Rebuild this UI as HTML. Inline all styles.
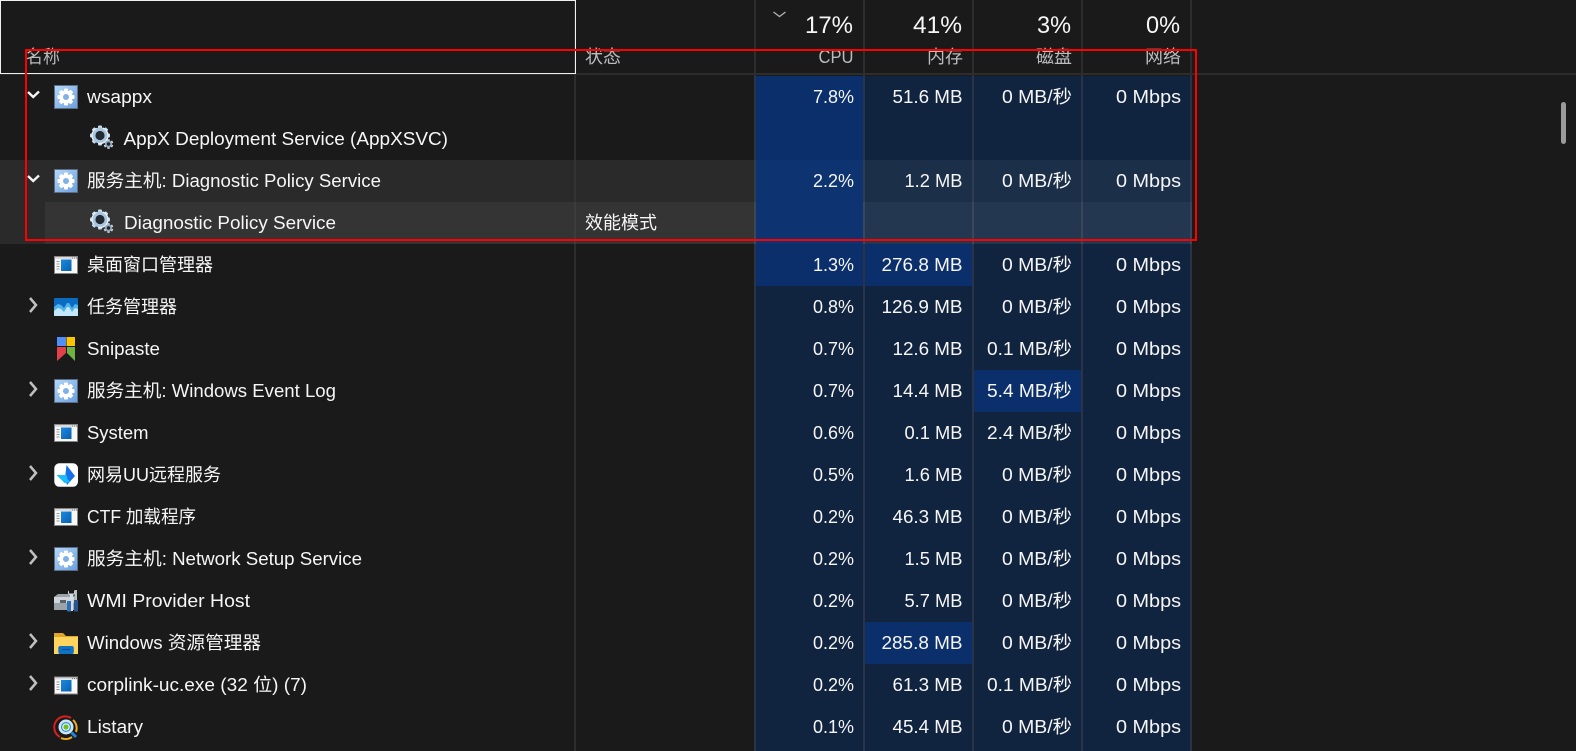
<!DOCTYPE html>
<html><head><meta charset="utf-8"><style>
html,body{margin:0;padding:0;background:#1a1a1a;width:1576px;height:751px;overflow:hidden}
svg{display:block}
text{font-family:"Liberation Sans","Noto Sans CJK SC",sans-serif;font-size:18px;fill:#f6f6f6}
.e{text-anchor:end}
.h{fill:#bcbcbc}
.b{font-size:24.500px;fill:#f6f6f6;text-anchor:end}
</style></head><body>
<svg width="1576" height="751" viewBox="0 0 1576 751" xmlns="http://www.w3.org/2000/svg">
<defs>
<linearGradient id="gt" x1="0" y1="0" x2="1" y2="1"><stop offset="0" stop-color="#b4d8f8"/><stop offset="1" stop-color="#6a9ede"/></linearGradient>
<linearGradient id="gs" x1="0" y1="0" x2="1" y2="1"><stop offset="0" stop-color="#1a8ae0"/><stop offset="1" stop-color="#0a5fb0"/></linearGradient>
<g id="svc">
<rect x="54.500" y="0.500" width="23" height="23" fill="url(#gt)" stroke="#5b6d84"/>
<g transform="translate(66,12)" fill="#fff">
<rect x="-2" y="-8.500" width="4" height="17" rx="1"/><rect x="-2" y="-8.500" width="4" height="17" rx="1" transform="rotate(45)"/><rect x="-2" y="-8.500" width="4" height="17" rx="1" transform="rotate(90)"/><rect x="-2" y="-8.500" width="4" height="17" rx="1" transform="rotate(135)"/>
<circle r="6.600"/><circle r="3" fill="#7fb0e6"/>
</g></g>
<g id="gears">
<g transform="translate(100,9.500)" fill="#c9dcec">
<rect x="-2" y="-10" width="4" height="20" rx="1"/><rect x="-2" y="-10" width="4" height="20" rx="1" transform="rotate(45)"/><rect x="-2" y="-10" width="4" height="20" rx="1" transform="rotate(90)"/><rect x="-2" y="-10" width="4" height="20" rx="1" transform="rotate(135)"/>
<circle r="8" fill="#a9c6e0"/><circle r="8" fill="none" stroke="#eef5fb" stroke-width="1.200" stroke-dasharray="14 6"/><circle r="4.600" fill="#222a33"/></g>
<g transform="translate(108.500,18)" fill="#d6dde4">
<rect x="-1.200" y="-4.800" width="2.400" height="9.600"/><rect x="-1.200" y="-4.800" width="2.400" height="9.600" transform="rotate(60)"/><rect x="-1.200" y="-4.800" width="2.400" height="9.600" transform="rotate(120)"/>
<circle r="3.600" fill="#8fa6ba"/><circle r="1.700" fill="#1f252b"/></g>
</g>
<g id="win">
<rect x="54.500" y="0.500" width="23" height="17" fill="#f8f8f8" stroke="#868686"/>
<rect x="55" y="1" width="22" height="2" fill="#dcdcdc"/>
<rect x="61" y="3.500" width="10.500" height="11.500" fill="url(#gs)"/>
<path d="M56.500 5.500h3M56.500 8h3M56.500 10.500h3M56.500 13h3" stroke="#9a9a9a" stroke-width="1"/>
<path d="M72 2h1M74 2h1M76 2h1" stroke="#777" stroke-width="1"/>
</g>
<g id="cr"><path d="M30 -7l6 7-6 7" fill="none" stroke="#c0c0c0" stroke-width="2.500"/></g>
<g id="cd"><path d="M28 -3l5.200 5 5.800-5.500" fill="none" stroke="#f4f4f4" stroke-width="2.400"/></g>
</defs>

<rect width="1576" height="751" fill="#1a1a1a"/>

<!-- row highlights -->
<rect x="0" y="160" width="755" height="42" fill="#2a2a2a"/>
<rect x="0" y="202" width="45" height="42" fill="#2a2a2a"/>
<rect x="45" y="202" width="710" height="42" fill="#343434"/>

<!-- heat background -->
<rect x="755" y="76" width="436" height="675" fill="#11243f"/>
<rect x="755" y="76" width="109" height="168" fill="#0a2f6b"/>
<rect x="864" y="160" width="327" height="42" fill="#1c2f49"/>
<rect x="864" y="202" width="327" height="42" fill="#243750"/>
<rect x="755" y="160" width="109" height="84" fill="#0d3371"/>
<rect x="755" y="244" width="218" height="42" fill="#0a2f6b"/>
<rect x="973" y="370" width="109" height="42" fill="#0a2f6b"/>
<rect x="864" y="622" width="109" height="42" fill="#0a2f6b"/>

<!-- separators -->
<rect x="0" y="73" width="1576" height="2" fill="#2d2d2d"/>
<path d="M575 0V160M575 244V751" stroke="#2d2d2d" stroke-width="2"/>
<path d="M575 160V202" stroke="#333333" stroke-width="2"/>
<path d="M575 202V244" stroke="#3c3c3c" stroke-width="2"/>
<path d="M755 0V75M864 0V75M973 0V75M1082 0V75M1191 0V75" stroke="#2d2d2d" stroke-width="2"/>
<path d="M755 75V751M864 75V751M973 75V751M1082 75V751M1191 75V751" stroke="#2a3446" stroke-width="2"/>
<path d="M755 160V202M864 160V202M973 160V202M1082 160V202M1191 160V202" stroke="#303c50" stroke-width="2"/>
<path d="M755 202V244M864 202V244M973 202V244M1082 202V244M1191 202V244" stroke="#3b4658" stroke-width="2"/>

<!-- focus box -->
<rect x="0.500" y="0.500" width="575" height="73" fill="none" stroke="#f0f0f0" stroke-width="1"/>

<!-- header -->
<path d="M773.500 12l6 4.500 6-4.500" fill="none" stroke="#b0b0b0" stroke-width="1.300"/>
<text class="b" x="853" y="33" textLength="48" lengthAdjust="spacingAndGlyphs">17%</text>
<text class="b" x="962" y="33" textLength="49" lengthAdjust="spacingAndGlyphs">41%</text>
<text class="b" x="1071" y="33" textLength="34" lengthAdjust="spacingAndGlyphs">3%</text>
<text class="b" x="1180" y="33" textLength="34" lengthAdjust="spacingAndGlyphs">0%</text>
<text class="h" x="26" y="63" textLength="34" lengthAdjust="spacingAndGlyphs">名称</text>
<text class="h" x="585" y="63" textLength="36" lengthAdjust="spacingAndGlyphs">状态</text>
<text class="h e" x="853.500" y="63" textLength="35" lengthAdjust="spacingAndGlyphs">CPU</text>
<text class="h e" x="963" y="63" textLength="36" lengthAdjust="spacingAndGlyphs">内存</text>
<text class="h e" x="1072" y="63" textLength="36" lengthAdjust="spacingAndGlyphs">磁盘</text>
<text class="h e" x="1181" y="63" textLength="36" lengthAdjust="spacingAndGlyphs">网络</text>

<!-- icons -->
<use href="#cd" y="95"/><use href="#svc" y="85"/>
<use href="#gears" y="126"/>
<use href="#cd" y="179"/><use href="#svc" y="169"/>
<use href="#gears" y="210"/>
<use href="#win" y="256"/>
<use href="#cr" y="305"/>
<g>
<rect x="54" y="298" width="24" height="18" rx="1" fill="#0a6cc0"/>
<path d="M54 307l4-3 3 1 3 3 3-5 2 0 3 5 3-4 3 1v11H54z" fill="#50b2ec"/>
<path d="M54 311l4-3 3 1 3 3 3-5 2 0 3 5 3-4 3 1v6a1 1 0 0 1-1 1H55a1 1 0 0 1-1-1z" fill="#c4e8fb"/>
</g>
<g>
<rect x="57" y="337" width="9" height="9" fill="#4f8ff7"/>
<rect x="66.500" y="337" width="8.500" height="9" fill="#ffc400"/>
<path d="M57 347h9v6l-9 8z" fill="#e2404a"/>
<path d="M67 347h8v14l-8-8z" fill="#6cb33f"/>
</g>
<use href="#cr" y="389"/><use href="#svc" y="379"/>
<use href="#win" y="424"/>
<use href="#win" y="508"/>
<use href="#cr" y="473"/>
<g>
<rect x="54.300" y="463.300" width="23.700" height="23.500" rx="5" fill="#fff"/>
<path d="M66.500 465l8.500 11-8 9-2-7z" fill="#1670e8"/>
<path d="M56.500 475h10l1 4 3 3-6 1z" fill="#19bdfc"/>
</g>
<use href="#cr" y="557"/><use href="#svc" y="547"/>
<g>
<path d="M54 597l4-3h14l3 3v13H54z" fill="#9aa3aa"/>
<rect x="54" y="597" width="20" height="6" fill="#cfd5da"/>
<rect x="60" y="600" width="6" height="3" fill="#59626a"/>
<path d="M69 590.500c-2 1.500-1 4 1 4.500v16h3v-16c2-.5 3-3 1-4.500v3h-5z" fill="#d8dde2"/>
<rect x="74.500" y="590" width="2.500" height="10" fill="#b8bfc6"/>
<rect x="67" y="601" width="4" height="10.500" fill="#2f6fb5"/>
<rect x="74" y="600" width="4" height="11.500" fill="#28578f"/>
</g>
<use href="#cr" y="641"/>
<g>
<path d="M54 633h9l3 3h12v18H54z" fill="#e3a526"/>
<rect x="54" y="637" width="24" height="17" fill="#fcd45e"/>
<rect x="58.300" y="646" width="15.500" height="8" rx="2" fill="#0f72c2"/>
<rect x="62" y="649" width="8" height="1" fill="#0a4f8f"/>
</g>
<use href="#cr" y="683"/><use href="#win" y="676.500"/>
<g fill="none">
<path d="M60 737a11 11 0 0 1-3-17 11 11 0 0 1 14-2" stroke="#d81e1e" stroke-width="2"/>
<path d="M73 720a11 11 0 0 1 3 12M72 737a11 11 0 0 1-11 1" stroke="#f0ad1c" stroke-width="2"/>
<circle cx="66" cy="727" r="7.500" fill="#cfe6f6"/>
<circle cx="66" cy="727" r="5" fill="#2f8fd8"/>
<circle cx="66" cy="727" r="3.800" fill="#f4f8fb"/>
<circle cx="66" cy="727" r="2.600" fill="#6cc21a"/>
<path d="M71.500 732.500l4.500 4.500" stroke="#1f86dc" stroke-width="3"/>
</g>

<!-- names -->
<text x="87" y="103" textLength="65" lengthAdjust="spacingAndGlyphs">wsappx</text>
<text x="123.500" y="145" textLength="324.500" lengthAdjust="spacingAndGlyphs">AppX Deployment Service (AppXSVC)</text>
<text x="87" y="187" textLength="294" lengthAdjust="spacingAndGlyphs">服务主机: Diagnostic Policy Service</text>
<text x="124" y="229" textLength="212" lengthAdjust="spacingAndGlyphs">Diagnostic Policy Service</text>
<text x="585" y="229" textLength="72" lengthAdjust="spacingAndGlyphs">效能模式</text>
<text x="87" y="271" textLength="126" lengthAdjust="spacingAndGlyphs">桌面窗口管理器</text>
<text x="87" y="313" textLength="90" lengthAdjust="spacingAndGlyphs">任务管理器</text>
<text x="87" y="355" textLength="73" lengthAdjust="spacingAndGlyphs">Snipaste</text>
<text x="87" y="397" textLength="249" lengthAdjust="spacingAndGlyphs">服务主机: Windows Event Log</text>
<text x="87" y="439" textLength="61.500" lengthAdjust="spacingAndGlyphs">System</text>
<text x="87" y="481" textLength="134" lengthAdjust="spacingAndGlyphs">网易UU远程服务</text>
<text x="87" y="523" textLength="109" lengthAdjust="spacingAndGlyphs">CTF 加载程序</text>
<text x="87" y="565" textLength="275" lengthAdjust="spacingAndGlyphs">服务主机: Network Setup Service</text>
<text x="87" y="607" textLength="163" lengthAdjust="spacingAndGlyphs">WMI Provider Host</text>
<text x="87" y="649" textLength="174" lengthAdjust="spacingAndGlyphs">Windows 资源管理器</text>
<text x="87" y="691" textLength="220" lengthAdjust="spacingAndGlyphs">corplink-uc.exe (32 位) (7)</text>
<text x="87" y="733" textLength="56" lengthAdjust="spacingAndGlyphs">Listary</text>

<!-- CPU -->
<text class="e" x="854" y="103" textLength="41" lengthAdjust="spacingAndGlyphs">7.8%</text>
<text class="e" x="854" y="187" textLength="41" lengthAdjust="spacingAndGlyphs">2.2%</text>
<text class="e" x="854" y="271" textLength="41" lengthAdjust="spacingAndGlyphs">1.3%</text>
<text class="e" x="854" y="313" textLength="41" lengthAdjust="spacingAndGlyphs">0.8%</text>
<text class="e" x="854" y="355" textLength="41" lengthAdjust="spacingAndGlyphs">0.7%</text>
<text class="e" x="854" y="397" textLength="41" lengthAdjust="spacingAndGlyphs">0.7%</text>
<text class="e" x="854" y="439" textLength="41" lengthAdjust="spacingAndGlyphs">0.6%</text>
<text class="e" x="854" y="481" textLength="41" lengthAdjust="spacingAndGlyphs">0.5%</text>
<text class="e" x="854" y="523" textLength="41" lengthAdjust="spacingAndGlyphs">0.2%</text>
<text class="e" x="854" y="565" textLength="41" lengthAdjust="spacingAndGlyphs">0.2%</text>
<text class="e" x="854" y="607" textLength="41" lengthAdjust="spacingAndGlyphs">0.2%</text>
<text class="e" x="854" y="649" textLength="41" lengthAdjust="spacingAndGlyphs">0.2%</text>
<text class="e" x="854" y="691" textLength="41" lengthAdjust="spacingAndGlyphs">0.2%</text>
<text class="e" x="854" y="733" textLength="41" lengthAdjust="spacingAndGlyphs">0.1%</text>

<!-- Memory -->
<text class="e" x="962.500" y="103" textLength="70" lengthAdjust="spacingAndGlyphs">51.6 MB</text>
<text class="e" x="962.500" y="187" textLength="58" lengthAdjust="spacingAndGlyphs">1.2 MB</text>
<text class="e" x="962.500" y="271" textLength="81" lengthAdjust="spacingAndGlyphs">276.8 MB</text>
<text class="e" x="962.500" y="313" textLength="81" lengthAdjust="spacingAndGlyphs">126.9 MB</text>
<text class="e" x="962.500" y="355" textLength="70" lengthAdjust="spacingAndGlyphs">12.6 MB</text>
<text class="e" x="962.500" y="397" textLength="70" lengthAdjust="spacingAndGlyphs">14.4 MB</text>
<text class="e" x="962.500" y="439" textLength="58" lengthAdjust="spacingAndGlyphs">0.1 MB</text>
<text class="e" x="962.500" y="481" textLength="58" lengthAdjust="spacingAndGlyphs">1.6 MB</text>
<text class="e" x="962.500" y="523" textLength="70" lengthAdjust="spacingAndGlyphs">46.3 MB</text>
<text class="e" x="962.500" y="565" textLength="58" lengthAdjust="spacingAndGlyphs">1.5 MB</text>
<text class="e" x="962.500" y="607" textLength="58" lengthAdjust="spacingAndGlyphs">5.7 MB</text>
<text class="e" x="962.500" y="649" textLength="81" lengthAdjust="spacingAndGlyphs">285.8 MB</text>
<text class="e" x="962.500" y="691" textLength="70" lengthAdjust="spacingAndGlyphs">61.3 MB</text>
<text class="e" x="962.500" y="733" textLength="70" lengthAdjust="spacingAndGlyphs">45.4 MB</text>

<!-- Disk -->
<text class="e" x="1072" y="103" textLength="70" lengthAdjust="spacingAndGlyphs">0 MB/秒</text>
<text class="e" x="1072" y="187" textLength="70" lengthAdjust="spacingAndGlyphs">0 MB/秒</text>
<text class="e" x="1072" y="271" textLength="70" lengthAdjust="spacingAndGlyphs">0 MB/秒</text>
<text class="e" x="1072" y="313" textLength="70" lengthAdjust="spacingAndGlyphs">0 MB/秒</text>
<text class="e" x="1072" y="355" textLength="85" lengthAdjust="spacingAndGlyphs">0.1 MB/秒</text>
<text class="e" x="1072" y="397" textLength="85" lengthAdjust="spacingAndGlyphs">5.4 MB/秒</text>
<text class="e" x="1072" y="439" textLength="85" lengthAdjust="spacingAndGlyphs">2.4 MB/秒</text>
<text class="e" x="1072" y="481" textLength="70" lengthAdjust="spacingAndGlyphs">0 MB/秒</text>
<text class="e" x="1072" y="523" textLength="70" lengthAdjust="spacingAndGlyphs">0 MB/秒</text>
<text class="e" x="1072" y="565" textLength="70" lengthAdjust="spacingAndGlyphs">0 MB/秒</text>
<text class="e" x="1072" y="607" textLength="70" lengthAdjust="spacingAndGlyphs">0 MB/秒</text>
<text class="e" x="1072" y="649" textLength="70" lengthAdjust="spacingAndGlyphs">0 MB/秒</text>
<text class="e" x="1072" y="691" textLength="85" lengthAdjust="spacingAndGlyphs">0.1 MB/秒</text>
<text class="e" x="1072" y="733" textLength="70" lengthAdjust="spacingAndGlyphs">0 MB/秒</text>

<!-- Network -->
<text class="e" x="1181" y="103" textLength="65" lengthAdjust="spacingAndGlyphs">0 Mbps</text>
<text class="e" x="1181" y="187" textLength="65" lengthAdjust="spacingAndGlyphs">0 Mbps</text>
<text class="e" x="1181" y="271" textLength="65" lengthAdjust="spacingAndGlyphs">0 Mbps</text>
<text class="e" x="1181" y="313" textLength="65" lengthAdjust="spacingAndGlyphs">0 Mbps</text>
<text class="e" x="1181" y="355" textLength="65" lengthAdjust="spacingAndGlyphs">0 Mbps</text>
<text class="e" x="1181" y="397" textLength="65" lengthAdjust="spacingAndGlyphs">0 Mbps</text>
<text class="e" x="1181" y="439" textLength="65" lengthAdjust="spacingAndGlyphs">0 Mbps</text>
<text class="e" x="1181" y="481" textLength="65" lengthAdjust="spacingAndGlyphs">0 Mbps</text>
<text class="e" x="1181" y="523" textLength="65" lengthAdjust="spacingAndGlyphs">0 Mbps</text>
<text class="e" x="1181" y="565" textLength="65" lengthAdjust="spacingAndGlyphs">0 Mbps</text>
<text class="e" x="1181" y="607" textLength="65" lengthAdjust="spacingAndGlyphs">0 Mbps</text>
<text class="e" x="1181" y="649" textLength="65" lengthAdjust="spacingAndGlyphs">0 Mbps</text>
<text class="e" x="1181" y="691" textLength="65" lengthAdjust="spacingAndGlyphs">0 Mbps</text>
<text class="e" x="1181" y="733" textLength="65" lengthAdjust="spacingAndGlyphs">0 Mbps</text>

<!-- scrollbar -->
<rect x="1561" y="102" width="5" height="42" rx="2.500" fill="#9a9a9a"/>

<!-- red annotation -->
<rect x="26" y="50" width="1170" height="190" fill="none" stroke="#ff0000" stroke-width="2"/>
</svg>
</body></html>
